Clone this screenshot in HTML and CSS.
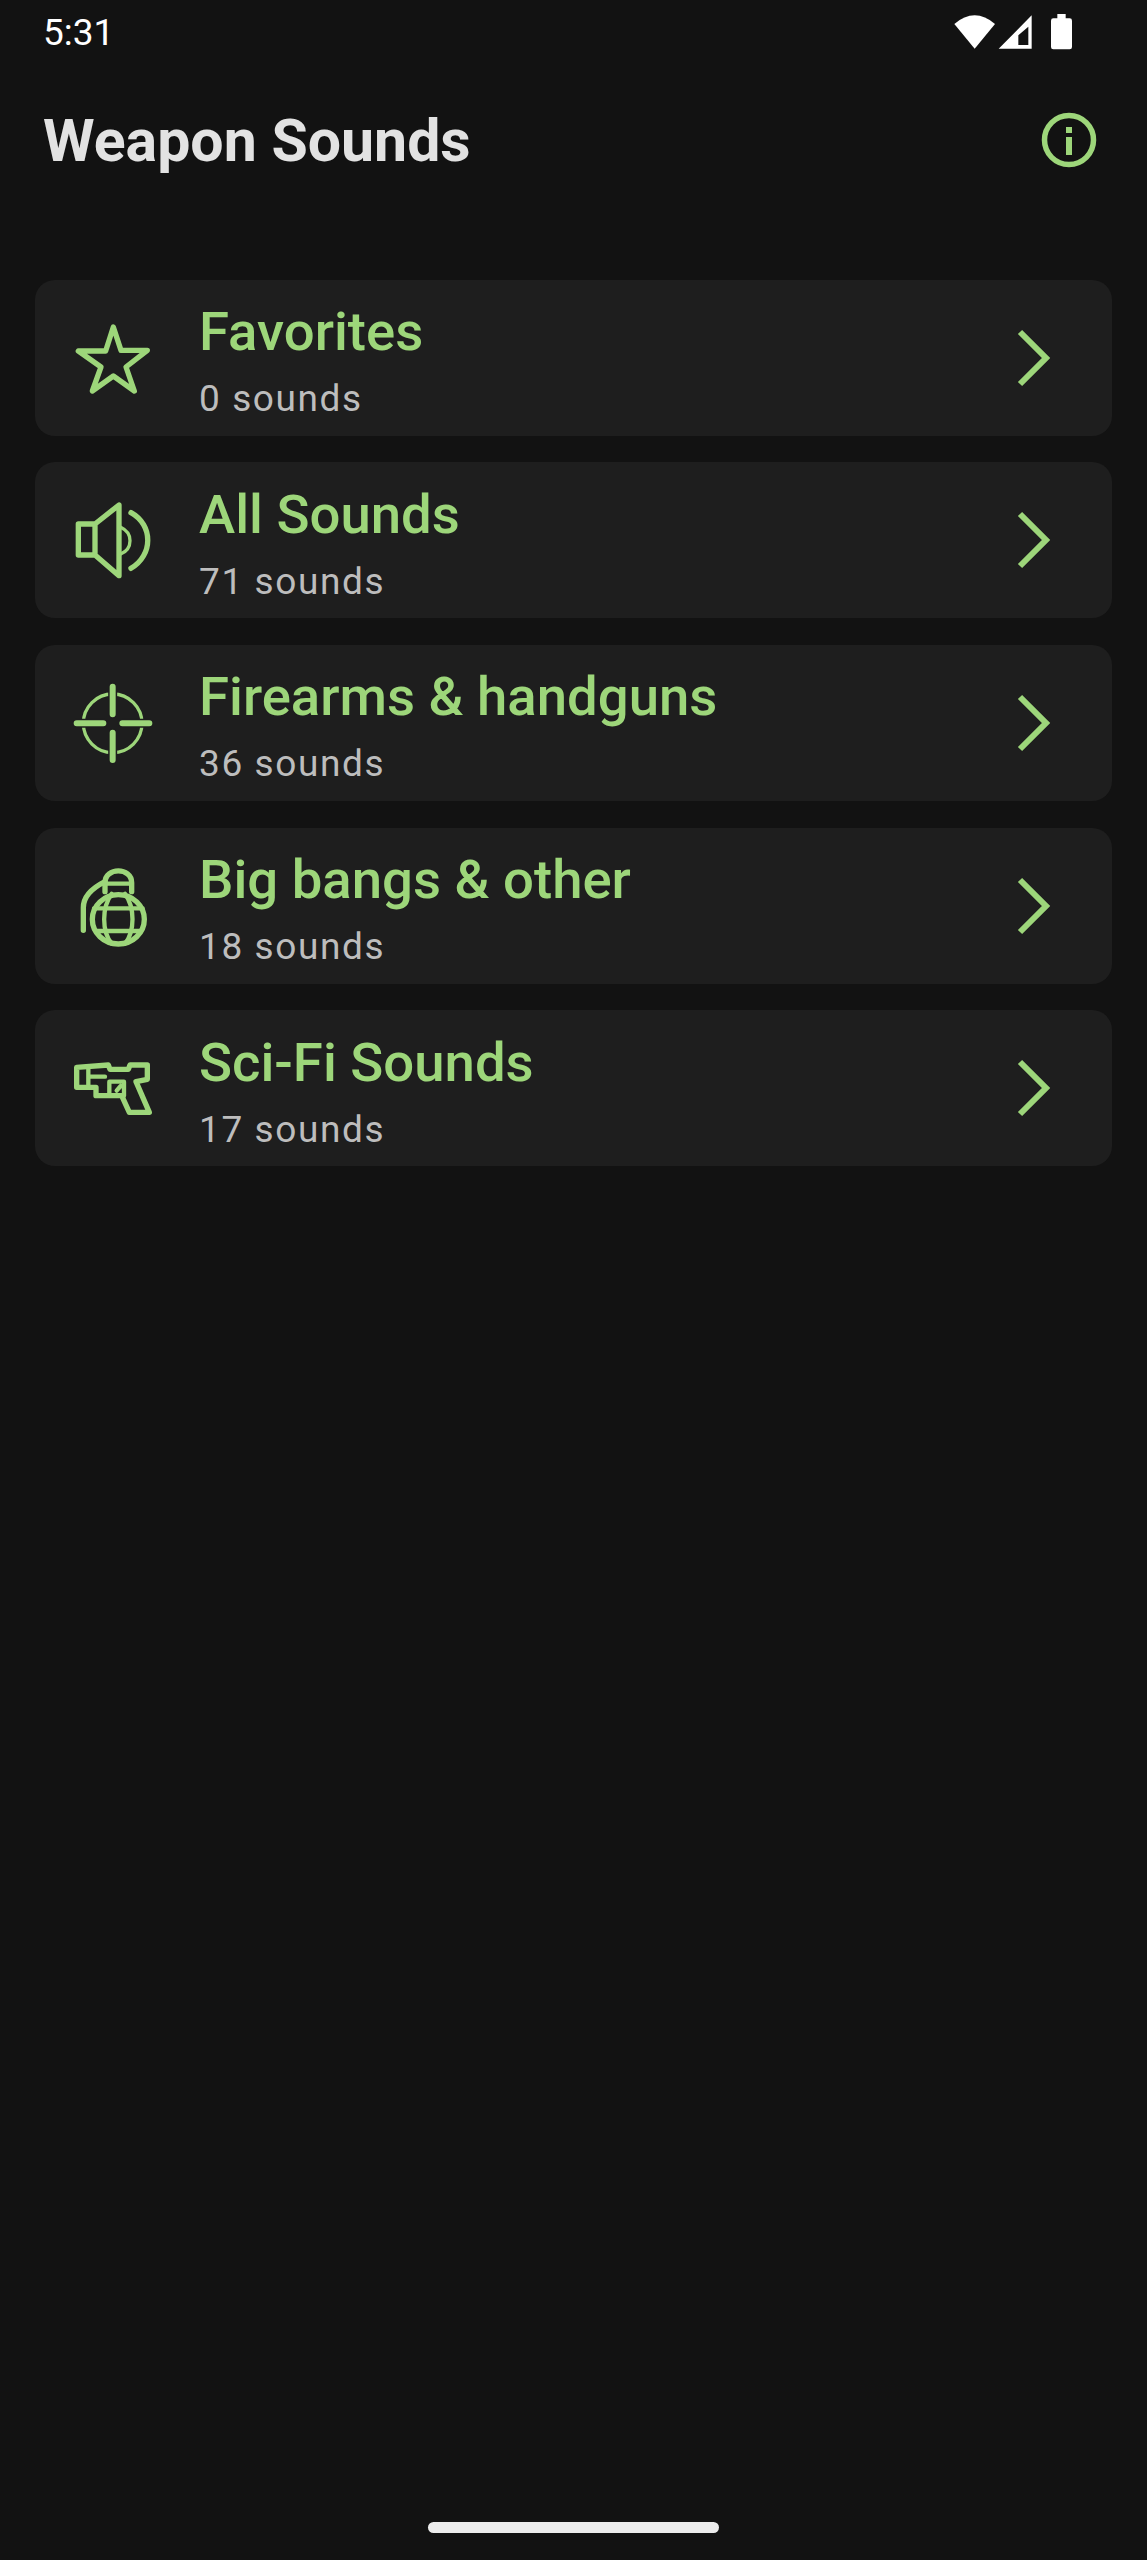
FILE: index.html
```html
<!DOCTYPE html>
<html lang="en">
<head>
  <meta charset="UTF-8" />
  <title>Weapon Sounds</title>
  <link rel="stylesheet" href="styles.css">
</head>
<body>
  <div class="status-bar">
    <span class="clock">5:31</span>
    <svg class="status-icons" viewBox="150 30 375 135">
      <path d="M163 72 Q224 20 285 72 L224 146 Z" fill="#fff"/>
      <path fill-rule="evenodd" d="M296 146 L395 46 V146 Z M355 135 H385 V80 L355 106 Z" fill="#fff"/>
      <path d="M472 42 H497 V55 H509 Q516 55 516 62 V141 Q516 148 509 148 H460 Q453 148 453 141 V62 Q453 55 460 55 H472 Z" fill="#fff"/>
    </svg>
  </div>

  <div class="app-bar">
    <h1>Weapon Sounds</h1>
    <svg class="info" viewBox="0 0 60 60">
      <circle cx="30" cy="30" r="24.5" fill="none" stroke="#9dd67a" stroke-width="5.5"/>
      <rect x="27" y="17" width="6" height="6" fill="#9dd67a"/>
      <rect x="27" y="27" width="6" height="18" fill="#9dd67a"/>
    </svg>
  </div>

  <div class="list">
    <div class="card">
      <svg class="icon" viewBox="90 66 390 390">
        <path class="line" d="M280 168 L303 238 H382 L318 288 L343 360 L280 315 L217 360 L243 288 L175 240 H257 Z"/>
      </svg>
      <div class="text">
        <div class="name">Favorites</div>
        <div class="count">0 sounds</div>
      </div>
      <svg class="chevron" viewBox="0 0 44 60"><path d="M6 4 L32 30 L6 56"/></svg>
    </div>

    <div class="card">
      <svg class="icon" viewBox="0 15 390 390">
        <path class="line" d="M85 162 H135 L207 105 V317 L135 255 H85 Z M135 162 V255"/>
        <path class="line thin" d="M212 172 Q240 185 240 212 Q240 240 212 252"/>
        <path class="line" d="M243 128 C310 165 310 255 243 295"/>
      </svg>
      <div class="text">
        <div class="name">All Sounds</div>
        <div class="count">71 sounds</div>
      </div>
      <svg class="chevron" viewBox="0 0 44 60"><path d="M6 4 L32 30 L6 56"/></svg>
    </div>

    <div class="card">
      <svg class="icon" viewBox="0 -6 390 390">
        <circle class="line thin" cx="188" cy="190" r="88"/>
        <path class="line halo" d="M188 80 V163 M188 218 V300 M80 190 H160 M217 190 H298"/>
        <path class="line bold" d="M188 80 V163 M188 218 V300 M80 190 H160 M217 190 H298"/>
      </svg>
      <div class="text">
        <div class="name">Firearms &amp; handguns</div>
        <div class="count">36 sounds</div>
      </div>
      <svg class="chevron" viewBox="0 0 44 60"><path d="M6 4 L32 30 L6 56"/></svg>
    </div>

    <div class="card">
      <svg class="icon" viewBox="0 -30 390 390">
        <ellipse class="line" cx="205" cy="205" rx="78" ry="74"/>
        <path class="line mid" d="M185 128 C155 170 155 240 185 278 M225 128 C255 170 255 240 225 278"/>
        <path class="line mid" d="M132 172 H278 M140 240 H270"/>
        <path class="line" d="M165 122 V95 C165 48 245 48 245 95 V122"/>
        <path class="line mid" d="M165 98 H245"/>
        <path class="line" d="M100 238 V170 C100 135 125 112 165 92"/>
      </svg>
      <div class="text">
        <div class="name">Big bangs &amp; other</div>
        <div class="count">18 sounds</div>
      </div>
      <svg class="chevron" viewBox="0 0 44 60"><path d="M6 4 L32 30 L6 56"/></svg>
    </div>

    <div class="card">
      <svg class="icon" viewBox="0 -21 390 390">
        <path class="line" d="M80 112 L175 105 L180 118 H235 L240 105 H292 V148 L258 155 L298 247 H238 L215 197 H138 V172 H80 Z"/>
        <path class="line mid" d="M115 115 V170 M178 192 V155 H222 V197 M200 182 L212 168 M120 140 H165"/>
      </svg>
      <div class="text">
        <div class="name">Sci-Fi Sounds</div>
        <div class="count">17 sounds</div>
      </div>
      <svg class="chevron" viewBox="0 0 44 60"><path d="M6 4 L32 30 L6 56"/></svg>
    </div>
  </div>

  <div class="home-row">
    <div class="home-bar"></div>
  </div>
</body>
</html>
```

FILE: styles.css
```css
* {
  box-sizing: border-box;
}
body {
  font-family: 'Roboto', sans-serif;
  background: #121212;
  margin: 0;
  padding: 0;
  height: 2560px;
  display: flex;
  flex-direction: column;
}
.status-bar {
  display: flex;
  justify-content: space-between;
  align-items: center;
  height: 64px;
  padding: 0 72px 0 43px;
}
.clock {
  color: #fff;
  font-size: 37px;
}
.status-icons {
  width: 125px;
  height: 45px;
}
.app-bar {
  display: flex;
  justify-content: space-between;
  align-items: center;
  height: 152px;
  padding: 0 48px 0 43px;
}
.app-bar h1 {
  margin: 0;
  color: #e2e2e2;
  font-size: 59px;
  font-weight: 700;
}
.info {
  width: 60px;
  height: 60px;
}
.list {
  display: flex;
  flex-direction: column;
  gap: 26.7px;
  margin-top: 63.5px;
  padding: 0 35px;
}
.card {
  display: flex;
  align-items: center;
  height: 156px;
  padding: 0 54px 0 15px;
  background: #1e1e1e;
  border-radius: 20px;
}
.icon {
  width: 130px;
  height: 130px;
  flex-shrink: 0;
}
.line {
  fill: none;
  stroke: #9dd67a;
  stroke-width: 16;
  stroke-linecap: round;
  stroke-linejoin: round;
}
.line.thin {
  stroke-width: 10;
}
.line.mid {
  stroke-width: 13;
}
.line.bold {
  stroke-width: 18;
}
.line.halo {
  stroke: #1e1e1e;
  stroke-width: 27;
}
.text {
  flex: 1;
  margin-left: 19px;
  padding-top: 6px;
}
.name {
  color: #9dd67a;
  font-size: 54.5px;
  font-weight: 500;
  line-height: 64px;
}
.count {
  color: #bdbdbd;
  font-size: 37px;
  letter-spacing: 1.6px;
  line-height: 46px;
  margin-top: 13px;
}
.chevron {
  width: 44px;
  height: 60px;
  flex-shrink: 0;
}
.chevron path {
  fill: none;
  stroke: #9dd67a;
  stroke-width: 6;
}
.home-row {
  margin-top: auto;
  display: flex;
  justify-content: center;
  padding-bottom: 27px;
}
.home-bar {
  width: 291px;
  height: 11px;
  background: #ececec;
  border-radius: 6px;
}
```
